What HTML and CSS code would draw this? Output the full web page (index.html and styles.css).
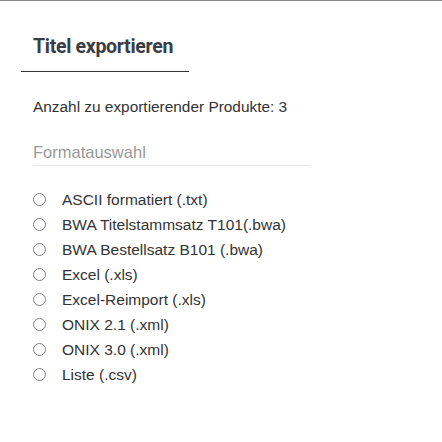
FILE: index.html
```html
<!DOCTYPE html>
<html lang="de">
<head>
<meta charset="utf-8">
<link rel="stylesheet" href="styles.css">
</head>
<body>
<div class="dialog">
  <div class="header">
    <h1 class="title">Titel exportieren</h1>
  </div>
  <p class="count">Anzahl zu exportierender Produkte: 3</p>
  <div class="section">
    <div class="section-label">Formatauswahl</div>
    <ul class="options">
      <li class="option"><span class="radio"></span><span>ASCII formatiert (.txt)</span></li>
      <li class="option"><span class="radio"></span><span>BWA Titelstammsatz T101(.bwa)</span></li>
      <li class="option"><span class="radio"></span><span>BWA Bestellsatz B101 (.bwa)</span></li>
      <li class="option"><span class="radio"></span><span>Excel (.xls)</span></li>
      <li class="option"><span class="radio"></span><span>Excel-Reimport (.xls)</span></li>
      <li class="option"><span class="radio"></span><span>ONIX 2.1 (.xml)</span></li>
      <li class="option"><span class="radio"></span><span>ONIX 3.0 (.xml)</span></li>
      <li class="option"><span class="radio"></span><span>Liste (.csv)</span></li>
    </ul>
  </div>
</div>
</body>
</html>
```

FILE: styles.css
```css
html, body {
  margin: 0;
  padding: 0;
  background: #fff;
}
body {
  font-family: "Liberation Sans", Arial, sans-serif;
  color: #333;
}
.dialog {
  border-top: 1px solid #8a8a8e;
  height: 441px;
  box-sizing: border-box;
}
.header {
  margin: 0 0 0 21px;
  width: 168px;
  border-bottom: 1px solid #333;
  padding: 34px 0 13px 12px;
  box-sizing: border-box;
}
.title {
  margin: 0;
  font-family: Roboto, sans-serif;
  font-weight: 700;
  font-size: 19.5px;
  line-height: 23px;
  color: #3a3d45;
  letter-spacing: -0.3px;
}
.count {
  margin: 26px 0 0 33px;
  font-size: 15.4px;
  line-height: 18px;
}
.section {
  margin: 27px 0 0 33px;
  width: 277px;
}
.section-label {
  color: #999;
  font-size: 16.5px;
  line-height: 19px;
  padding-bottom: 3px;
  border-bottom: 1px solid #e6e6e6;
}
.options {
  list-style: none;
  margin: 21px 0 0 0;
  padding: 0;
}
.option {
  display: flex;
  align-items: center;
  height: 25px;
  font-size: 15.5px;
}
.radio {
  width: 11px;
  height: 11px;
  border: 1px solid #808080;
  border-radius: 50%;
  margin-right: 16px;
  flex: none;
}
```
